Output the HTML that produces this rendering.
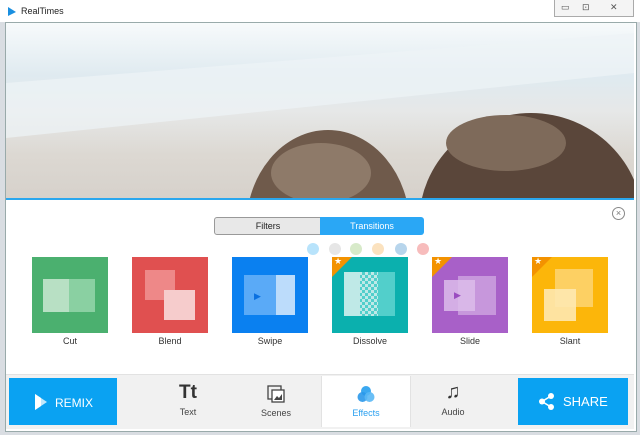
<!DOCTYPE html>
<html><head><style>
body{margin:0;width:640px;height:435px;overflow:hidden;background:#d9dde2;font-family:"Liberation Sans",sans-serif;position:relative}
.abs{position:absolute}
.tile{position:absolute;top:257px;width:76px;height:76px}
.lbl{position:absolute;top:336px;width:100px;text-align:center;font-size:9px;color:#333}
.tab{position:absolute;top:376px;height:51px;width:88px;text-align:center;font-size:9px;color:#444}
.star{position:absolute;left:0;top:0;width:0;height:0;border-top:20px solid #f39200;border-right:20px solid transparent}
.star span{position:absolute;left:2px;top:-21px;color:#fff;font-size:9px}
</style></head><body>
<div class="abs" style="left:0;top:0;width:640px;height:22px;background:#fff"></div>
<svg class="abs" style="left:7px;top:6px" width="10" height="11"><path d="M1 1L9 6L1 10Z" fill="#1a8fe0"/></svg>
<div class="abs" style="left:21px;top:6px;font-size:9px;color:#222">RealTimes</div>
<div class="abs" style="left:554px;top:0;width:78px;height:16px;border:1px solid #aaa;border-top:none;background:#f4f4f4;font-size:9px;color:#555">
<span class="abs" style="left:6px;top:2px">▭</span><span class="abs" style="left:27px;top:2px">⊡</span><span class="abs" style="left:55px;top:2px">✕</span></div>
<div class="abs" style="left:5px;top:22px;width:630px;height:408px;background:#fff;border:1px solid #9aa"></div>
<svg class="abs" style="left:6px;top:23px" width="628" height="176">
<defs><linearGradient id="g" x1="0" y1="0" x2="0" y2="1"><stop offset="0" stop-color="#f7fafb"/><stop offset=".3" stop-color="#dfeaf0"/><stop offset=".5" stop-color="#e6e8e8"/><stop offset=".75" stop-color="#dcd8d2"/><stop offset="1" stop-color="#d6d1cb"/></linearGradient></defs>
<rect width="628" height="176" fill="url(#g)"/>
<path d="M0 60 L628 10 L628 50 L0 115Z" fill="#eef4f7" opacity=".7"/>
<ellipse cx="322" cy="205" rx="82" ry="98" fill="#6f5a4b"/>
<ellipse cx="315" cy="150" rx="50" ry="30" fill="#8e7a69"/>
<ellipse cx="525" cy="200" rx="112" ry="110" fill="#5a463a"/>
<ellipse cx="500" cy="120" rx="60" ry="28" fill="#7e6a5a"/>
</svg>
<div class="abs" style="left:6px;top:198px;width:628px;height:2px;background:#2aa7ee"></div>
<div class="abs" style="left:612px;top:207px;width:11px;height:11px;border:1px solid #888;border-radius:50%;font-size:9px;line-height:11px;text-align:center;color:#777">×</div>
<div class="abs" style="left:214px;top:217px;width:106px;height:16px;background:#e8e8e8;border:1px solid #999;border-radius:3px 0 0 3px;font-size:9px;line-height:16px;text-align:center;color:#222">Filters</div>
<div class="abs" style="left:320px;top:217px;width:104px;height:18px;background:#2aa7f5;border-radius:0 3px 3px 0;font-size:9px;line-height:18px;text-align:center;color:#fff">Transitions</div>
<svg class="abs" style="left:300px;top:240px" width="140" height="20">
<circle cx="13" cy="9" r="6" fill="#b8e3fb"/><circle cx="35" cy="9" r="6" fill="#e6e6e6"/><circle cx="56" cy="9" r="6" fill="#d7eac9"/><circle cx="78" cy="9" r="6" fill="#fbe2bf"/><circle cx="101" cy="9" r="6" fill="#b7d5ec"/><circle cx="123" cy="9" r="6" fill="#f7bcbc"/></svg>
<div class="tile" style="left:32px;background:#4bb06f"><div class="abs" style="left:11px;top:22px;width:26px;height:33px;background:#b8e0c4"></div><div class="abs" style="left:37px;top:22px;width:26px;height:33px;background:#8ad0a2"></div></div>
<div class="tile" style="left:132px;background:#e05050"><div class="abs" style="left:13px;top:13px;width:30px;height:30px;background:#ee8888"></div><div class="abs" style="left:32px;top:33px;width:31px;height:30px;background:#f6cccc"></div></div>
<div class="tile" style="left:232px;background:#0a80f0"><div class="abs" style="left:12px;top:18px;width:32px;height:40px;background:#5aaaf7"></div><div class="abs" style="left:44px;top:18px;width:19px;height:40px;background:#bcdcfb"></div><div class="abs" style="left:22px;top:34px;color:#0a70e0;font-size:9px">▶</div></div>
<div class="tile" style="left:332px;background:#0bb0ae"><div class="star"><span>★</span></div><div class="abs" style="left:12px;top:15px;width:51px;height:44px;background:repeating-conic-gradient(#bfe9e7 0 25%,#52cfcb 0 50%) 0 0/6px 6px"></div><div class="abs" style="left:12px;top:15px;width:16px;height:44px;background:#bfe9e7"></div><div class="abs" style="left:46px;top:15px;width:17px;height:44px;background:#52cfcb"></div></div>
<div class="tile" style="left:432px;background:#a860c8"><div class="star"><span>★</span></div><div class="abs" style="left:26px;top:19px;width:38px;height:39px;background:#c797dc"></div><div class="abs" style="left:12px;top:23px;width:31px;height:31px;background:#dcbcea;opacity:.85"></div><div class="abs" style="left:22px;top:33px;color:#9a4cc0;font-size:9px">▶</div></div>
<div class="tile" style="left:532px;background:#fcb60a"><div class="star"><span>★</span></div><div class="abs" style="left:23px;top:12px;width:38px;height:38px;background:#fdd063"></div><div class="abs" style="left:12px;top:32px;width:32px;height:32px;background:#fee8b0;opacity:.9"></div></div>
<div class="lbl" style="left:20px">Cut</div><div class="lbl" style="left:120px">Blend</div><div class="lbl" style="left:220px">Swipe</div><div class="lbl" style="left:320px">Dissolve</div><div class="lbl" style="left:420px">Slide</div><div class="lbl" style="left:520px">Slant</div>
<div class="abs" style="left:6px;top:374px;width:628px;height:54px;background:#f1f1f1;border-top:1px solid #e2e2e2"></div>
<div class="abs" style="left:9px;top:378px;width:108px;height:47px;background:#0aa2f2;color:#fff;font-size:12px;line-height:50px"><svg class="abs" style="left:26px;top:16px" width="12" height="16"><path d="M0 0L12 8L0 16Z" fill="#fff" opacity=".75"/><path d="M0 0L6 4L6 12L0 16Z" fill="#fff"/></svg><span style="margin-left:46px">REMIX</span></div>
<div class="abs" style="left:518px;top:378px;width:110px;height:47px;background:#0aa2f2;color:#fff;font-size:13px;line-height:47px"><svg class="abs" style="left:21px;top:15px" width="16" height="17"><circle cx="12" cy="3" r="3" fill="#fff"/><circle cx="3" cy="8.5" r="3" fill="#fff"/><circle cx="12" cy="14" r="3" fill="#fff"/><path d="M12 3L3 8.5L12 14" stroke="#fff" stroke-width="1.6" fill="none"/></svg><span style="margin-left:45px">SHARE</span></div>
<div class="tab" style="left:144px"><div style="font-size:19px;font-weight:bold;color:#333;margin-top:7px;line-height:20px">Tt</div><div style="margin-top:4px">Text</div></div>
<div class="tab" style="left:232px"><svg style="margin-top:9px" width="18" height="18"><rect x="1" y="1" width="13" height="13" fill="none" stroke="#444" stroke-width="1.3"/><rect x="5" y="5" width="12" height="12" fill="#fff" stroke="#444" stroke-width="1.3"/><path d="M7 15L10 11L12 13L15 9V15Z" fill="#444"/></svg><div style="margin-top:3px">Scenes</div></div>
<div class="tab" style="left:321px;background:#fff;width:88px;border-left:1px solid #e2e2e2;border-right:1px solid #e2e2e2"><svg style="margin-top:9px" width="18" height="18"><circle cx="9" cy="6" r="5" fill="#3ba8f0"/><circle cx="5.5" cy="12" r="5" fill="#2a98ea" opacity=".9"/><circle cx="12.5" cy="12" r="5" fill="#5ab8f5" opacity=".9"/></svg><div style="margin-top:3px;color:#2aa0f0">Effects</div></div>
<div class="tab" style="left:409px"><div style="font-size:20px;color:#333;margin-top:6px;line-height:20px">♫</div><div style="margin-top:5px">Audio</div></div>
</body></html>
